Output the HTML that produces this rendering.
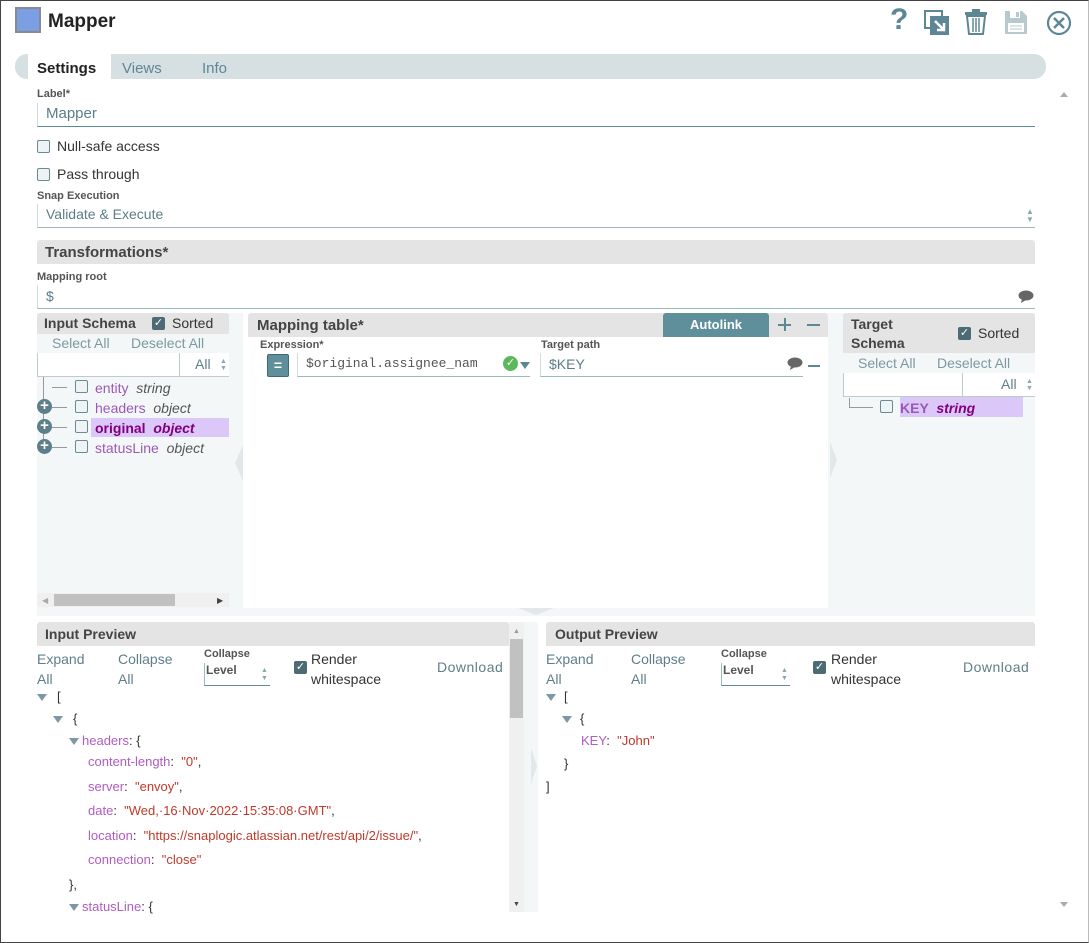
<!DOCTYPE html>
<html><head><meta charset="utf-8"><style>
*{box-sizing:border-box;margin:0;padding:0}
body{width:1089px;height:943px;position:relative;background:#fff;font-family:"Liberation Sans",sans-serif;overflow:hidden;color:#333}
.a{position:absolute}
.frame{left:0;top:0;width:1089px;height:943px;border:1px solid #444;border-right:1px solid #bbb}
.lbl{font-size:11px;font-weight:bold;color:#555}
.inp{border-left:1px solid #cdd;border-bottom:1px solid #9bb;font-size:14px;color:#5a7d88;padding-left:8px}
.hdr{background:#e4e4e4;font-weight:bold;color:#444;font-size:14px;border-radius:3px 3px 0 0}
.cb{width:13px;height:13px;border:1px solid #6a8a95;border-radius:2px;background:#eef3f5}
.cbk{width:13px;height:13px;background:#4e6b75;border-radius:2px;color:#fff;font-size:11px;line-height:13px;text-align:center}
.link{color:#5e7e89;font-size:14px}
.pl{color:#9b59b6}
.ty{color:#555;font-style:italic}
.plus{width:15px;height:15px;border-radius:50%;background:#5c7f8a;color:#fff;font-size:15px;line-height:14px;text-align:center;font-weight:bold}
.k{color:#b05cc0}.s{color:#c0392b}
.tri{width:0;height:0;border-left:5px solid transparent;border-right:5px solid transparent;border-top:7px solid #7c98a2;display:inline-block;vertical-align:middle}
.code{font-size:13px}
.code div{position:absolute;white-space:nowrap}
</style></head><body>
<div class="a frame"></div>
<div class="a" style="left:15px;top:7px;width:26px;height:26px;background:#7b9fe3;border:2px solid #8a8a8a"></div>
<div class="a" style="left:48px;top:11px;font-size:19px;font-weight:bold;color:#222">Mapper</div>
<div class="a" style="left:890px;top:3px;font-size:30px;font-weight:bold;color:#5e8795">?</div>
<svg class="a" style="left:924px;top:10px" width="26" height="26" viewBox="0 0 26 26"><rect x="1" y="1" width="17" height="17" fill="none" stroke="#5e8795" stroke-width="2"/><rect x="7" y="7" width="17" height="17" fill="#5e8795" stroke="#5e8795" stroke-width="2"/><path d="M11 11 L20 20 M20 13 V20 H13" stroke="#fff" stroke-width="2.5" fill="none"/></svg>
<svg class="a" style="left:964px;top:9px" width="24" height="26" viewBox="0 0 24 26"><rect x="1" y="3" width="22" height="3" fill="#5e8795"/><rect x="8" y="0" width="8" height="4" fill="#5e8795"/><path d="M3 7 L5 25 H19 L21 7 Z" fill="none" stroke="#5e8795" stroke-width="2"/><path d="M9 9V23M12 9V23M15 9V23" stroke="#5e8795" stroke-width="1.5"/></svg>
<svg class="a" style="left:1004px;top:10px" width="24" height="25" viewBox="0 0 24 25"><path d="M1 1 H18 L23 6 V24 H1 Z" fill="#b7c8ce"/><rect x="6" y="1" width="10" height="7" fill="#fff"/><rect x="12" y="2" width="3" height="5" fill="#b7c8ce"/><rect x="4" y="13" width="16" height="9" fill="#fff"/><path d="M6 16H18M6 19H18" stroke="#b7c8ce"/></svg>
<svg class="a" style="left:1046px;top:10px" width="26" height="26" viewBox="0 0 26 26"><circle cx="13" cy="13" r="11" fill="none" stroke="#5e8795" stroke-width="2.2"/><path d="M8 8L18 18M18 8L8 18" stroke="#5e8795" stroke-width="2.5"/></svg>
<div class="a" style="left:15px;top:54px;width:1031px;height:25px;background:#d6dfe2;border-radius:12px"></div>
<div class="a" style="left:28px;top:54px;width:83px;height:25px;background:#fff"></div>
<div class="a" style="left:37px;top:60px;font-size:15px;font-weight:bold;color:#222">Settings</div>
<div class="a" style="left:122px;top:60px;font-size:15px;color:#5e8795">Views</div>
<div class="a" style="left:202px;top:60px;font-size:15px;color:#5e8795">Info</div>
<div class="a" style="left:1060px;top:92px;width:0;height:0;border-left:4px solid transparent;border-right:4px solid transparent;border-bottom:5px solid #aaa"></div>
<div class="a" style="left:1060px;top:902px;width:0;height:0;border-left:4px solid transparent;border-right:4px solid transparent;border-top:5px solid #aaa"></div>
<div class="a lbl" style="left:37px;top:88px">Label*</div>
<div class="a inp" style="left:37px;top:103px;width:998px;height:24px;border-bottom:1px solid #5d8a99;font-size:15px;line-height:22px">Mapper</div>
<div class="a cb" style="left:37px;top:140px"></div><div class="a" style="left:57px;top:138px;font-size:14px">Null-safe access</div>
<div class="a cb" style="left:37px;top:168px"></div><div class="a" style="left:57px;top:166px;font-size:14px">Pass through</div>
<div class="a lbl" style="left:37px;top:190px">Snap Execution</div>
<div class="a inp" style="left:37px;top:204px;width:998px;height:24px;line-height:21px">Validate &amp; Execute</div>
<div class="a" style="left:1026px;top:208px;font-size:8px;color:#8aa;line-height:8px">▲<br>▼</div>
<div class="a hdr" style="left:37px;top:240px;width:998px;height:24px;padding:4px 8px;font-size:15px">Transformations*</div>
<div class="a lbl" style="left:37px;top:271px">Mapping root</div>
<div class="a inp" style="left:37px;top:285px;width:998px;height:24px;line-height:22px">$</div>
<svg class="a" style="left:1018px;top:290px" width="16" height="13"><ellipse cx="8" cy="5.5" rx="7.5" ry="5" fill="#666"/><path d="M4 9 L3 13 L8 10Z" fill="#666"/></svg>
<div class="a" style="left:37px;top:313px;width:192px;height:295px;background:#f4f7f8"></div>
<div class="a hdr" style="left:37px;top:313px;width:192px;height:21px;padding:2px 7px">Input Schema</div>
<div class="a cbk" style="left:152px;top:317px">✓</div><div class="a" style="left:172px;top:315px;font-size:14px">Sorted</div>
<div class="a link" style="left:52px;top:335px;color:#7c98a2">Select All</div><div class="a link" style="left:131px;top:335px;color:#7c98a2">Deselect All</div>
<div class="a" style="left:37px;top:353px;width:192px;height:24px;border-left:1px solid #bcc;border-bottom:1px solid #bcc;background:#fff"></div>
<div class="a" style="left:179px;top:353px;height:24px;border-left:1px solid #bcc"></div>
<div class="a link" style="left:195px;top:356px;color:#5e7e89">All</div><div class="a" style="left:220px;top:358px;font-size:7px;color:#8aa;line-height:7px">▲<br>▼</div>
<div class="a" style="left:43px;top:377px;width:1px;height:70px;background:#999"></div>
<div class="a" style="left:52px;top:387px;width:15px;height:1px;background:#999"></div>
<div class="a" style="left:52px;top:407px;width:15px;height:1px;background:#999"></div>
<div class="a" style="left:52px;top:427px;width:15px;height:1px;background:#999"></div>
<div class="a" style="left:52px;top:447px;width:15px;height:1px;background:#999"></div>
<div class="a plus" style="left:37px;top:399px">+</div><div class="a plus" style="left:37px;top:419px">+</div><div class="a plus" style="left:37px;top:439px">+</div>
<div class="a cb" style="left:75px;top:380px"></div><div class="a cb" style="left:75px;top:400px"></div><div class="a cb" style="left:75px;top:420px"></div><div class="a cb" style="left:75px;top:440px"></div>
<div class="a" style="left:91px;top:418px;width:138px;height:19px;background:#dcc8f8"></div>
<div class="a" style="left:95px;top:380px;font-size:14px"><span class="pl">entity</span> &nbsp;<span class="ty">string</span></div>
<div class="a" style="left:95px;top:400px;font-size:14px"><span class="pl">headers</span> &nbsp;<span class="ty">object</span></div>
<div class="a" style="left:95px;top:420px;font-size:14px;font-weight:bold;color:#800080"><span>original</span> &nbsp;<i>object</i></div>
<div class="a" style="left:95px;top:440px;font-size:14px"><span class="pl">statusLine</span> &nbsp;<span class="ty">object</span></div>
<div class="a" style="left:37px;top:593px;width:192px;height:14px;background:#f0f0f0"></div>
<div class="a" style="left:54px;top:594px;width:121px;height:12px;background:#c1c1c1"></div>
<div class="a" style="left:42px;top:596px;font-size:8px;color:#aaa">◀</div><div class="a" style="left:217px;top:596px;font-size:8px;color:#444">▶</div>
<div class="a" style="left:229px;top:313px;width:14px;height:295px;background:#f4f7f8"></div>
<div class="a" style="left:235px;top:445px;width:0;height:0;border-top:18px solid transparent;border-bottom:18px solid transparent;border-right:8px solid #e2e8ea"></div>
<div class="a hdr" style="left:248px;top:313px;width:580px;height:24px;padding:4px 9px;font-size:15px">Mapping table*</div>
<div class="a" style="left:663px;top:313px;width:106px;height:24px;background:#5f8f9b;border-radius:3px 3px 0 0;color:#fff;font-weight:bold;font-size:13px;text-align:center;line-height:24px">Autolink</div>
<div class="a" style="left:778px;top:324px;width:13px;height:2px;background:#5e8795"></div>
<div class="a" style="left:783.5px;top:318px;width:2px;height:13px;background:#5e8795"></div>
<div class="a" style="left:807px;top:324px;width:13px;height:2px;background:#5e8795"></div>
<div class="a lbl" style="left:260px;top:339px">Expression*</div>
<div class="a lbl" style="left:541px;top:339px">Target path</div>
<div class="a" style="left:267px;top:354px;width:22px;height:23px;background:#5f8f9b;border:1px solid #3f6a75;border-radius:2px;color:#fff;font-size:14px;text-align:center;line-height:20px;font-weight:bold">=</div>
<div class="a inp" style="left:297px;top:353px;width:233px;height:24px;font-family:'Liberation Mono',monospace;font-size:13px;line-height:22px;color:#555;overflow:hidden;white-space:nowrap">$original.assignee_nam</div>
<div class="a" style="left:503px;top:356px;width:15px;height:15px;border-radius:50%;background:#5cb85c;color:#fff;font-size:11px;line-height:15px;text-align:center">✓</div>
<div class="a tri" style="left:520px;top:362px;border-top-color:#5e8795"></div>
<div class="a inp" style="left:540px;top:353px;width:263px;height:24px;line-height:22px">$KEY</div>
<svg class="a" style="left:787px;top:357px" width="16" height="13"><ellipse cx="8" cy="5.5" rx="7.5" ry="5" fill="#666"/><path d="M4 9 L3 13 L8 10Z" fill="#666"/></svg>
<div class="a" style="left:808px;top:365px;width:12px;height:2px;background:#5e8795"></div>
<div class="a" style="left:828px;top:313px;width:15px;height:295px;background:#f4f7f8"></div>
<div class="a" style="left:830px;top:442px;width:0;height:0;border-top:18px solid transparent;border-bottom:18px solid transparent;border-left:7px solid #e2e8ea"></div>
<div class="a" style="left:843px;top:313px;width:192px;height:295px;background:#f4f7f8"></div>
<div class="a hdr" style="left:843px;top:313px;width:192px;height:40px;padding:2px 8px;line-height:19px">Target<br>Schema</div>
<div class="a cbk" style="left:958px;top:327px">✓</div><div class="a" style="left:978px;top:325px;font-size:14px">Sorted</div>
<div class="a link" style="left:858px;top:355px;color:#7c98a2">Select All</div><div class="a link" style="left:937px;top:355px;color:#7c98a2">Deselect All</div>
<div class="a" style="left:843px;top:373px;width:192px;height:24px;border-left:1px solid #bcc;border-bottom:1px solid #bcc;background:#fff"></div>
<div class="a" style="left:962px;top:373px;height:24px;border-left:1px solid #bcc"></div>
<div class="a link" style="left:1001px;top:376px;color:#5e7e89">All</div><div class="a" style="left:1026px;top:378px;font-size:7px;color:#8aa;line-height:7px">▲<br>▼</div>
<div class="a" style="left:849px;top:398px;width:1px;height:9px;background:#999"></div>
<div class="a" style="left:849px;top:407px;width:24px;height:1px;background:#999"></div>
<div class="a cb" style="left:880px;top:400px"></div>
<div class="a" style="left:900px;top:397px;width:123px;height:20px;background:#dcc8f8"></div>
<div class="a" style="left:900px;top:400px;font-size:14px;font-weight:bold"><span style="color:#9b59b6">KEY</span> &nbsp;<i style="color:#800080">string</i></div>
<div class="a" style="left:37px;top:608px;width:998px;height:8px;background:#f4f7f8"></div>
<div class="a" style="left:518px;top:608px;width:0;height:0;border-left:18px solid transparent;border-right:18px solid transparent;border-top:7px solid #e2e8ea"></div>
<div class="a hdr" style="left:37px;top:622px;width:472px;height:24px;padding:4px 8px">Input Preview</div>
<div class="a" style="left:509px;top:622px;width:15px;height:290px;background:#f0f0f0"></div>
<div class="a" style="left:510px;top:639px;width:13px;height:79px;background:#c1c1c1"></div>
<div class="a" style="left:513px;top:628px;font-size:7px;color:#999">▲</div><div class="a" style="left:513px;top:901px;font-size:7px;color:#444">▼</div>
<div class="a" style="left:524px;top:622px;width:14px;height:290px;background:#f4f7f8"></div>
<div class="a" style="left:531px;top:748px;width:0;height:0;border-top:18px solid transparent;border-bottom:18px solid transparent;border-left:6px solid #e2e8ea"></div>
<div class="a link" style="left:37px;top:649px;line-height:20px">Expand<br>All</div>
<div class="a link" style="left:118px;top:649px;line-height:20px">Collapse<br>All</div>
<div class="a lbl" style="left:204px;top:648px;color:#555">Collapse</div>
<div class="a" style="left:204px;top:663px;width:66px;height:23px;border-left:1px solid #9bb;border-bottom:1px solid #5d8a99;font-size:12px;color:#555;font-weight:bold;padding-left:1px">Level</div>
<div class="a" style="left:261px;top:667px;font-size:7px;color:#8aa;line-height:8px">▲<br>▼</div>
<div class="a cbk" style="left:294px;top:661px">✓</div>
<div class="a" style="left:311px;top:649px;font-size:14px;line-height:20px;color:#333">Render<br>whitespace</div>
<div class="a link" style="left:437px;top:659px;letter-spacing:0.5px">Download</div>
<div class="a code" style="left:37px;top:0;width:470px">
<div style="left:0;top:689px"><span class="tri" style="margin-right:10px"></span>[</div>
<div style="left:16px;top:711px"><span class="tri" style="margin-right:10px"></span>{</div>
<div style="left:32px;top:733px"><span class="tri" style="margin-right:3px"></span><span class="k">headers</span>: {</div>
<div style="left:51px;top:754px"><span class="k">content-length</span>: &nbsp;<span class="s">"0"</span>,</div>
<div style="left:51px;top:779px"><span class="k">server</span>: &nbsp;<span class="s">"envoy"</span>,</div>
<div style="left:51px;top:803px"><span class="k">date</span>: &nbsp;<span class="s">"Wed,·16·Nov·2022·15:35:08·GMT"</span>,</div>
<div style="left:51px;top:828px"><span class="k">location</span>: &nbsp;<span class="s">"https://snaplogic.atlassian.net/rest/api/2/issue/"</span>,</div>
<div style="left:51px;top:852px"><span class="k">connection</span>: &nbsp;<span class="s">"close"</span></div>
<div style="left:32px;top:877px">},</div>
<div style="left:32px;top:899px"><span class="tri" style="margin-right:3px"></span><span class="k">statusLine</span>: {</div>
</div>
<div class="a hdr" style="left:546px;top:622px;width:489px;height:24px;padding:4px 9px">Output Preview</div>
<div class="a link" style="left:546px;top:649px;line-height:20px">Expand<br>All</div>
<div class="a link" style="left:631px;top:649px;line-height:20px">Collapse<br>All</div>
<div class="a lbl" style="left:721px;top:648px">Collapse</div>
<div class="a" style="left:721px;top:663px;width:69px;height:23px;border-left:1px solid #9bb;border-bottom:1px solid #5d8a99;font-size:12px;color:#555;font-weight:bold;padding-left:1px">Level</div>
<div class="a" style="left:781px;top:667px;font-size:7px;color:#8aa;line-height:8px">▲<br>▼</div>
<div class="a cbk" style="left:813px;top:661px">✓</div>
<div class="a" style="left:831px;top:649px;font-size:14px;line-height:20px;color:#333">Render<br>whitespace</div>
<div class="a link" style="left:963px;top:659px;letter-spacing:0.5px">Download</div>
<div class="a code" style="left:546px;top:0">
<div style="left:0;top:689px"><span class="tri" style="margin-right:8px"></span>[</div>
<div style="left:16px;top:711px"><span class="tri" style="margin-right:8px"></span>{</div>
<div style="left:35px;top:733px"><span class="k">KEY</span>: &nbsp;<span class="s">"John"</span></div>
<div style="left:18px;top:756px">}</div>
<div style="left:0;top:779px">]</div>
</div>
</body></html>
